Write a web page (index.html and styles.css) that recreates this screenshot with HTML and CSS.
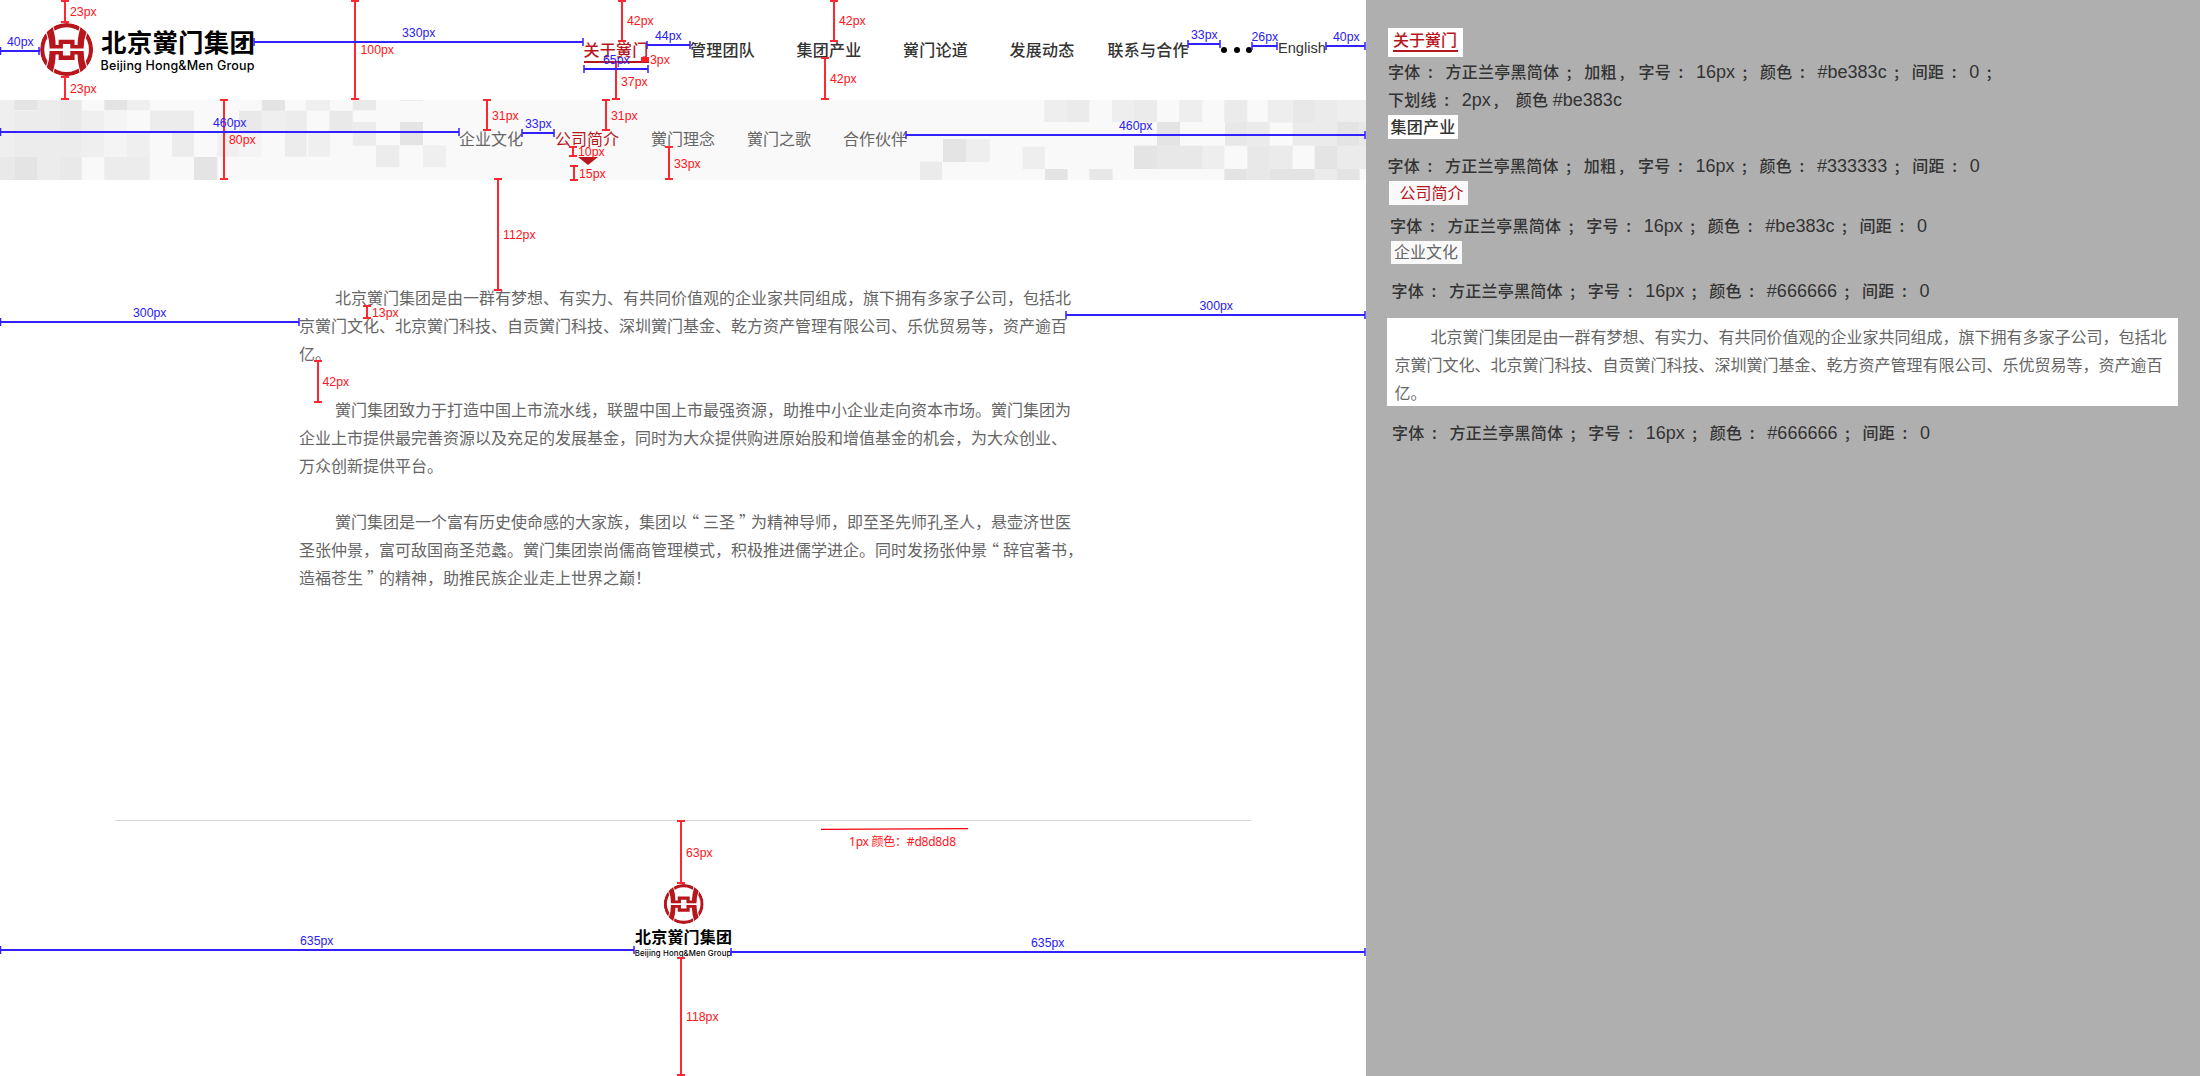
FILE: index.html
```html
<!DOCTYPE html>
<html lang="zh-CN">
<head>
<meta charset="utf-8">
<title>北京黉门集团</title>
<link rel="stylesheet" href="styles.css">
</head>
<body>
<svg class="defs" width="0" height="0">
  <defs>
    <clipPath id="disc"><circle cx="80" cy="80" r="80"/></clipPath>
    <path id="upper" d="M20 27L38 12Q47 42 47 66H56V50H104V66H113Q113 42 122 12L140 27Q131 50 131 77H91V63H69V77H29Q29 50 20 27Z"/>
    <g id="bars">
      <use href="#upper"/>
      <use href="#upper" transform="translate(0 161) scale(1 -1)"/>
    </g>
    <g id="emblem" clip-path="url(#disc)">
      <circle cx="80" cy="80" r="73.5" fill="none" stroke="#b8161d" stroke-width="12.500"/>
      <use href="#bars" fill="#fff" stroke="#fff" stroke-width="6"/>
      <use href="#bars" fill="#b8161d"/>
    </g>
  </defs>
</svg>
<div class="page">
  <main class="artboard">
    <header class="header">
      <svg class="logo" width="216" height="54" viewBox="0 0 216 54">
        <use href="#emblem" transform="scale(.3325)"/>
        <text class="logo-cn" x="61" y="28.800" textLength="154" lengthAdjust="spacing">北京黉门集团</text>
        <text class="logo-en" x="60.5" y="46.900" textLength="154">Beijing Hong&amp;Men Group</text>
      </svg>
      <nav class="nav">
        <a class="nav-item active">关于黉门</a>
        <a class="nav-item">管理团队</a>
        <a class="nav-item">集团产业</a>
        <a class="nav-item">黉门论道</a>
        <a class="nav-item">发展动态</a>
        <a class="nav-item last">联系与合作</a>
      </nav>
      <div class="dots"><i></i><i></i><i></i></div>
      <a class="lang">English</a>
    </header>
    <div class="subnav">
      <svg class="mosaic" viewBox="0 300 4098 240" preserveAspectRatio="none">
        <path fill="#efefef" d="M0 300h43v32h-43zM381 300h68v31h-68zM0 332h43v139h-43zM245 332h68v140h-68zM381 400h68v71h-68zM652 400h65v70h-65zM917 300h73v32h-73zM925 394h65v76h-65zM785 332h70v62h-70zM1269 436h69v66h-69z"/>
        <path fill="#e4e4e4" d="M43 300h68v31h-68zM313 300h68v31h-68zM43 471h68v69h-68zM582 471h70v69h-70zM785 300h70v32h-70zM1200 366h69v70h-69z"/>
        <path fill="#ececec" d="M111 300h69v171h-69zM43 332h68v139h-68zM180 402h65v69h-65zM111 471h69v69h-69zM313 471h136v69h-136zM450 332h66v62h-66zM516 332h66v138h-66zM855 332h65v138h-65zM1058 366h70v71h-70zM1128 436h70v66h-70z"/>
        <path fill="#e9e9e9" d="M180 300h65v102h-65zM180 471h65v69h-65zM0 471h43v69h-43zM717 332h68v62h-68zM988 332h70v62h-70zM1058 300h70v31h-70zM1200 300h69v2h-69z"/>
        <path fill="#f4f4f4" d="M313 332h68v139h-68zM717 394h68v76h-68z"/>
        <g transform="translate(2700 0)">
          <path fill="#eeeeee" d="M433 300h66v66h-66zM636 300h65v66h-65zM838 300h69v66h-69zM1103 300h75v68h-75zM1311 300h87v66h-87zM198 417h71v69h-71zM368 440h66v67h-66zM907 437h66v70h-66z"/>
          <path fill="#ebebeb" d="M499 300h69v66h-69zM973 300h69v66h-69zM1244 300h67v137h-67zM1178 366h66v71h-66zM1042 366h67v71h-67zM60 485h66v55h-66zM1109 437h69v70h-69zM1311 437h87v70h-87zM1244 507h67v33h-67zM701 300h70v66h-70z"/>
          <path fill="#e8e8e8" d="M1178 300h66v66h-66zM975 366h67v71h-67zM1378 366h20v71h-20zM568 507h70v33h-70zM771 437h136v70h-136zM1042 437h67v103h-67z"/>
          <path fill="#e4e4e4" d="M771 366h69v71h-69zM1311 366h67v71h-67zM129 417h69v69h-69zM435 507h68v33h-68zM702 437h69v70h-69zM1244 437h67v70h-67zM973 507h69v33h-69zM1109 507h135v33h-135zM1311 507h68v33h-68z"/>
        </g>
      </svg>
      <a class="sub-item">企业文化</a>
      <a class="sub-item current">公司简介</a>
      <a class="sub-item">黉门理念</a>
      <a class="sub-item">黉门之歌</a>
      <a class="sub-item">合作伙伴</a>
    </div>
    <article class="copy">
      <p>北京黉门集团是由一群有梦想、有实力、有共同价值观的企业家共同组成，旗下拥有多家子公司，包括北<br>京黉门文化、北京黉门科技、自贡黉门科技、深圳黉门基金、乾方资产管理有限公司、乐优贸易等，资产逾百<br>亿。</p>
      <p>黉门集团致力于打造中国上市流水线，联盟中国上市最强资源，助推中小企业走向资本市场。黉门集团为<br>企业上市提供最完善资源以及充足的发展基金，同时为大众提供购进原始股和增值基金的机会，为大众创业、<br>万众创新提供平台。</p>
      <p>黉门集团是一个富有历史使命感的大家族，集团以<span class="q q-open">“</span>三圣<span class="q">”</span>为精神导师，即至圣先师孔圣人，悬壶济世医<br>圣张仲景，富可敌国商圣范蠡。黉门集团崇尚儒商管理模式，积极推进儒学进企。同时发扬张仲景<span class="q q-open">“</span>辞官著书，<br>造福苍生<span class="q">”</span>的精神，助推民族企业走上世界之巅！</p>
    </article>
    <footer class="footer">
      <svg class="foot-logo" width="100" height="76" viewBox="0 0 100 76">
        <use href="#emblem" transform="translate(30.7 0) scale(.25)"/>
        <text class="foot-cn" x="2" y="59" textLength="97">北京黉门集团</text>
        <text class="foot-en" x="1.8" y="71.6" textLength="96.5">Beijing Hong&amp;Men Group</text>
      </svg>
    </footer>
    <svg class="marks" width="1366" height="1076" viewBox="0 0 1366 1076">
      <path class="line red" d="M65 0V22M65 77V99M355 0V99M622 0V41M834 0V41M825 58V99M616 62V99M487 100V130M606 100V130M224 100V179M669 147V179M573 147V156M574 166V180M498 179V290M367 306V318M318 361V402M681 821V883M681 958V1075"/>
      <path class="line red" d="M61 1h8M61 22h8M61 77h8M61 99h8M351 1h8M351 99h8M618 1h8M618 41h8M830 1h8M830 41h8M821 58h8M821 99h8M612 99h8M483 100h8M483 130h8M602 100h8M602 130h8M220 100h8M220 179h8M665 147h8M665 179h8M569 147h8M569 156h8M570 166h8M570 180h8M494 179h8M494 290h8M363 306h8M363 318h8M314 361h8M314 402h8M677 821h8M677 883h8M677 958h8M677 1075h8"/>
      <path class="line blue" d="M0 51H40M254 42H583M647 45H690M584 69H648M1188 44H1220M1252 46H1277M1326 46H1365M0 132H459M522 133H554M906 135H1365M0 322H299M1066 315H1365M0 950H634M731 952H1365"/>
      <path class="line blue thin" d="M.5 47v8M39 47v8M254 38v8M583 38v8M647 41v8M690 41v8M584 65v8M648 65v8M1188 40v8M1220 40v8M1252 42v8M1277 42v8M1326 42v8M1365 42v8M.5 128v8M459 128v8M522 129v8M554 129v8M906 131v8M1365 131v8M.5 318v8M299 318v8M1066 311v8M1365 311v8M.5 946v8M634 946v8M731 948v8M1365 948v8"/>
      <path fill="#ff1e28" d="M641 57h8v5h-8z"/>
      <path d="M821 829.4L968 828.6" stroke="#f00010" stroke-width="1.2"/>
      <g class="label red-text">
        <text x="70" y="16">23px</text><text x="70" y="93">23px</text><text x="360.500" y="54">100px</text>
        <text x="627" y="25">42px</text><text x="839" y="25">42px</text><text x="830" y="83">42px</text>
        <text x="621" y="86">37px</text><text x="650" y="64">3px</text><text x="492" y="120">31px</text>
        <text x="611" y="120">31px</text><text x="229" y="144">80px</text><text x="674" y="168">33px</text>
        <text x="578" y="156">10px</text><text x="579" y="178">15px</text><text x="503" y="239">112px</text>
        <text x="372" y="317">13px</text><text x="322.500" y="386">42px</text><text x="686" y="857">63px</text>
        <text x="686" y="1021">118px</text>
        <text class="note" x="849" y="846" textLength="107">1px 颜色：#d8d8d8</text>
      </g>
      <g class="label blue-text">
        <text x="7" y="46">40px</text><text x="402" y="37">330px</text><text x="655" y="40">44px</text>
        <text x="603" y="64">65px</text><text x="1191" y="39">33px</text><text x="1251.500" y="41">26px</text>
        <text x="1333" y="41">40px</text><text x="213" y="127">460px</text><text x="525" y="128">33px</text>
        <text x="1119" y="130">460px</text><text x="133" y="317">300px</text><text x="1199.500" y="310">300px</text>
        <text x="300" y="945">635px</text><text x="1031" y="947">635px</text>
      </g>
    </svg>
  </main>
  <aside class="spec">
    <div class="chip chip-active"><span>关于黉门</span></div>
    <div class="row r1">字体<i>:</i>方正兰亭黑简体<i>;</i>加粗<i class="c">,</i>字号<i>:</i><b>16px</b><i>;</i>颜色<i>:</i><b>#be383c</b><i>;</i>间距<i>:</i><b>0</b><i>;</i></div>
    <div class="row r2">下划线<i>:</i><b>2px</b><i class="c wide">,</i>颜色<b class="sp">#be383c</b></div>
    <div class="chip chip-nav">集团产业</div>
    <div class="row r3">字体<i>:</i>方正兰亭黑简体<i>;</i>加粗<i class="c">,</i>字号<i>:</i><b>16px</b><i>;</i>颜色<i>:</i><b>#333333</b><i>;</i>间距<i>:</i><b>0</b></div>
    <div class="chip chip-current">公司简介</div>
    <div class="row r4">字体<i>:</i>方正兰亭黑简体<i>;</i>字号<i>:</i><b>16px</b><i>;</i>颜色<i>:</i><b>#be383c</b><i>;</i>间距<i>:</i><b>0</b></div>
    <div class="chip chip-sub">企业文化</div>
    <div class="row r5">字体<i>:</i>方正兰亭黑简体<i>;</i>字号<i>:</i><b>16px</b><i>;</i>颜色<i>:</i><b>#666666</b><i>;</i>间距<i>:</i><b>0</b></div>
    <div class="sample"><p>北京黉门集团是由一群有梦想、有实力、有共同价值观的企业家共同组成，旗下拥有多家子公司，包括北<br>京黉门文化、北京黉门科技、自贡黉门科技、深圳黉门基金、乾方资产管理有限公司、乐优贸易等，资产逾百<br>亿。</p></div>
    <div class="row r6">字体<i>:</i>方正兰亭黑简体<i>;</i>字号<i>:</i><b>16px</b><i>;</i>颜色<i>:</i><b>#666666</b><i>;</i>间距<i>:</i><b>0</b></div>
  </aside>
</div>
</body>
</html>
```
FILE: styles.css
```css
* { box-sizing: border-box; }
body {
  margin: 0;
  font: 16px/28px "Noto Sans CJK SC", sans-serif;
  color: #333;
  background: #fff;
  text-spacing-trim: space-all;
  overflow: hidden;
}
p { margin: 0; }
.defs { position: absolute; }
.page { display: grid; grid-template-columns: 1366px 1fr; height: 1076px; }
.artboard { position: relative; background: #fff; }

/* header */
.header { display: flex; height: 100px; padding: 23px 0 0 40px; }
.logo { flex: none; overflow: visible; }
.logo-cn { font-size: 25.500px; font-weight: 700; fill: #000; }
.logo-en { font: 500 12.500px Inter, sans-serif; fill: #000; }
.nav { display: flex; margin-left: 327.5px; gap: 41.5px; padding-top: 12px; }
.nav-item { width: 65px; height: 28px; white-space: nowrap; font-weight: 500; letter-spacing: .25px; }
.nav-item.active { color: #b8161d; border-bottom: 2px solid #b8161d; }
.nav-item.last { width: 81px; margin-left: -8.5px; }
.dots { display: flex; gap: 6.3px; margin: 24px 0 0 32.500px; }
.dots i { width: 6.3px; height: 6.3px; border-radius: 50%; background: #000; }
.lang { margin: 11px 0 0 25.5px; font: 14.600px/28px "Liberation Sans", Arial, sans-serif; color: #333; }

/* section navigation */
.subnav { position: relative; display: flex; gap: 32px; height: 80px; padding: 24px 0 0 459px; background: #f9f9f9; }
.mosaic { position: absolute; left: 0; top: 0; width: 100%; height: 100%; }
.sub-item { position: relative; width: 64px; color: #666; }
.current { color: #b8161d; }
.sub-item.current::after {
  content: "";
  position: absolute;
  left: 23px;
  top: 33px;
  border: 10px solid transparent;
  border-top: 8px solid #b8161d;
  border-bottom: 0;
}

/* copy */
.copy { display: flex; flex-direction: column; gap: 28px; padding: 103px 0 0 299px; color: #666; }
.copy p, .sample p { text-indent: 36px; white-space: nowrap; }
.q { display: inline-block; width: 16px; padding-left: 4px; text-indent: 0; line-height: 20px; }
.q-open { padding-left: 0; direction: rtl; padding-right: 4px; }
.footer { margin: 229px 115px 0; border-top: 1px solid #d8d8d8; padding: 63px 0 0 518px; }
.foot-logo { display: block; overflow: visible; }
.foot-cn { font-size: 16px; font-weight: 700; fill: #000; }
.foot-en { font: 500 7.800px Inter, sans-serif; fill: #000; }

/* dimension marks */
.marks { position: absolute; left: 0; top: 0; }
.line { fill: none; stroke-width: 2; }
.red { stroke: #ff2830; }
.blue { stroke: #3320ff; }
.thin { stroke-width: 1.500; }
.label { font: 12.300px "Liberation Sans", Arial, sans-serif; }
.red-text { fill: #ff1420; }
.blue-text { fill: #2b20f5; }
.note { font: 12px "Noto Sans", "Noto Sans CJK SC", sans-serif; }

/* spec panel */
.spec { display: flex; flex-direction: column; align-items: flex-start; background: #afafaf; padding: 28px 0 0 21px; }
.chip { flex: none; background: #fff; line-height: 23px; white-space: nowrap; }
.chip-active { width: 75px; height: 29px; margin-left: 1px; padding-left: 5px; color: #b8161d; font-weight: 500; }
.chip-active span { display: block; width: 65px; height: 24px; line-height: 22px; border-bottom: 2px solid #b8161d; }
.chip-nav { width: 70px; height: 24px; margin: 2px 0 0 1px; padding-left: 2.500px; font-weight: 500; letter-spacing: .25px; }
.chip-current { width: 79px; height: 24px; margin: 2px 0 0 2px; padding-left: 10.500px; color: #b8161d; background: #f9f9f9; }
.chip-sub { width: 71px; height: 23px; margin: 2px 0 0 4px; padding-left: 3px; line-height: 21px; color: #666; background: #f9f9f9; }
.row { flex: none; height: 28px; white-space: nowrap; letter-spacing: .25px; font-weight: 500; color: #333; }
.row b { font: 18px/1 "Liberation Sans", Arial, sans-serif; letter-spacing: 0; }
.row i { display: inline-block; width: 25px; padding-left: 7.500px; font-style: normal; letter-spacing: 0; line-height: 20px; }
.row i.c { width: 21.700px; padding-left: 3px; }
.row i.wide { width: 25px; }
.row b.sp { margin-left: 4.500px; }
.r1 { margin-left: 1px; }
.r2 { margin-left: 1px; }
.r3 { margin: 12px 0 0 .5px; }
.r4 { margin: 6px 0 0 3px; }
.r5 { margin: 12px 0 0 4.500px; }
.r6 { margin: 12px 0 0 5px; }
.sample { width: 791px; height: 88px; margin-top: 14px; padding: 4px 0 0 7.500px; background: #fff; color: #666; }
```
